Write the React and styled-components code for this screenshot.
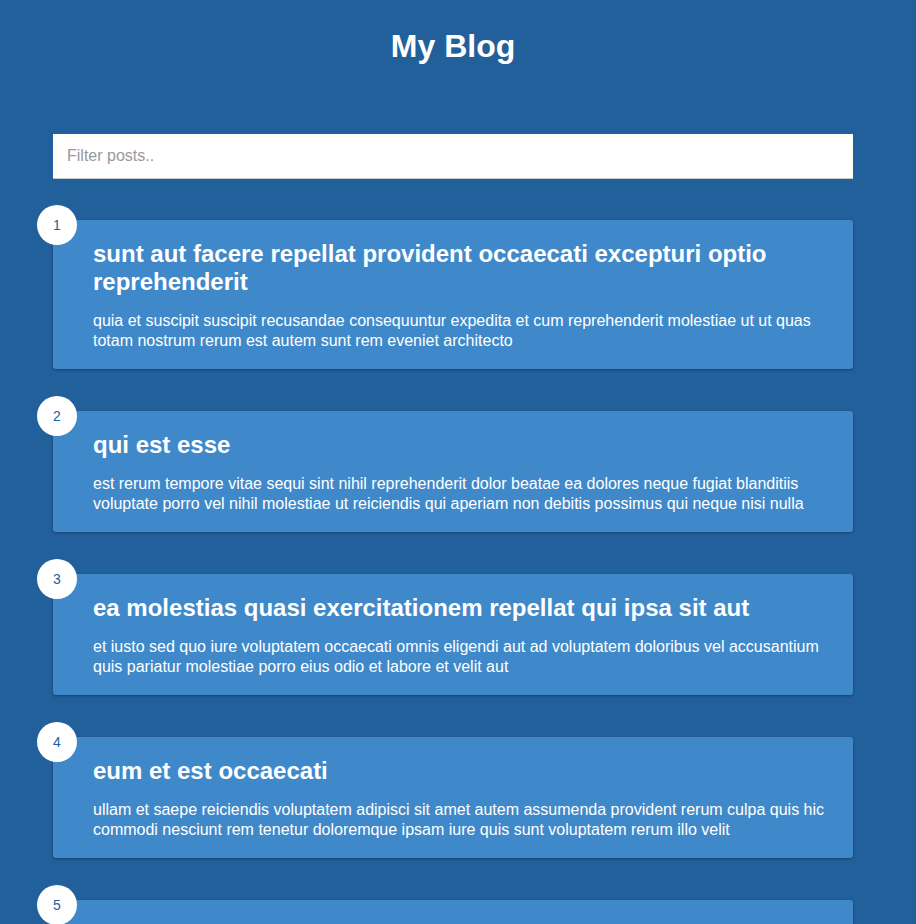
import React, { useState } from "react";
import styled, { createGlobalStyle } from "styled-components";

const posts = [
  {
    id: 1,
    title: "sunt aut facere repellat provident occaecati excepturi optio reprehenderit",
    body: "quia et suscipit suscipit recusandae consequuntur expedita et cum reprehenderit molestiae ut ut quas totam nostrum rerum est autem sunt rem eveniet architecto",
  },
  {
    id: 2,
    title: "qui est esse",
    body: "est rerum tempore vitae sequi sint nihil reprehenderit dolor beatae ea dolores neque fugiat blanditiis voluptate porro vel nihil molestiae ut reiciendis qui aperiam non debitis possimus qui neque nisi nulla",
  },
  {
    id: 3,
    title: "ea molestias quasi exercitationem repellat qui ipsa sit aut",
    body: "et iusto sed quo iure voluptatem occaecati omnis eligendi aut ad voluptatem doloribus vel accusantium quis pariatur molestiae porro eius odio et labore et velit aut",
  },
  {
    id: 4,
    title: "eum et est occaecati",
    body: "ullam et saepe reiciendis voluptatem adipisci sit amet autem assumenda provident rerum culpa quis hic commodi nesciunt rem tenetur doloremque ipsam iure quis sunt voluptatem rerum illo velit",
  },
  {
    id: 5,
    title: "nesciunt quas odio",
    body: "repudiandae veniam quaerat sunt sed alias aut fugiat sit autem sed est voluptatem omnis possimus esse voluptatibus quis est aut tenetur dolor neque",
  },
];

const App = () => {
  const [filter, setFilter] = useState("");
  const shown = posts.filter(
    (p) => p.title.includes(filter) || p.body.includes(filter)
  );
  return (
    <>
      <GlobalStyle />
      <Page>
        <Title>My Blog</Title>
        <Filter
          type="text"
          placeholder="Filter posts.."
          value={filter}
          onChange={(e) => setFilter(e.target.value)}
        />
        <List>
          {shown.map((post) => (
            <Post key={post.id}>
              <Number>{post.id}</Number>
              <PostTitle>{post.title}</PostTitle>
              <PostBody>{post.body}</PostBody>
            </Post>
          ))}
        </List>
      </Page>
    </>
  );
};

export default App;

const GlobalStyle = createGlobalStyle`
  html, body {
    margin: 0;
    padding: 0;
    background: #22609c;
    font-family: "Liberation Sans", Arial, Helvetica, sans-serif;
    color: #fff;
    overflow: hidden;
  }
  * {
    box-sizing: border-box;
  }
`;
const Page = styled.div`
  width: 800px;
  margin-left: 53px;
  padding-top: 24px;
`;
const Title = styled.h1`
  margin: 0 0 66px;
  font-size: 32px;
  line-height: 44px;
  font-weight: bold;
  text-align: center;
`;
const Filter = styled.input`
  display: block;
  width: 100%;
  height: 45px;
  padding: 0 14px;
  border: none;
  border-bottom: 1px solid #c8c8c8;
  font-family: inherit;
  font-size: 16px;
  color: #333;
  outline: none;
  &::placeholder {
    color: #999;
  }
`;
const List = styled.div`
  display: flex;
  flex-direction: column;
  gap: 42px;
  margin-top: 41px;
`;
const Post = styled.div`
  position: relative;
  background: #3f89ca;
  border-radius: 3px;
  box-shadow: 0 1px 3px rgba(0, 0, 0, 0.35);
  padding: 20px 20px 18px 40px;
`;
const Number = styled.div`
  position: absolute;
  top: -15px;
  left: -16px;
  width: 40px;
  height: 40px;
  border-radius: 50%;
  background: #fff;
  color: #22609c;
  font-size: 14px;
  display: flex;
  align-items: center;
  justify-content: center;
`;
const PostTitle = styled.h2`
  margin: 0 0 15px;
  font-size: 24px;
  line-height: 28px;
  font-weight: bold;
`;
const PostBody = styled.p`
  margin: 0;
  font-size: 16px;
  line-height: 20px;
`;
